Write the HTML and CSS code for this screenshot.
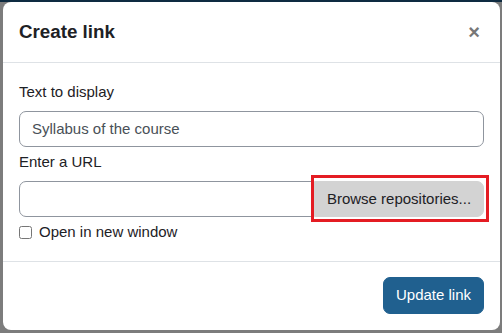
FILE: index.html
```html
<!DOCTYPE html>
<html lang="en">
<head>
<meta charset="utf-8">
<title>Create link</title>
<link rel="stylesheet" href="styles.css">
</head>
<body>
<div class="modal">
  <div class="modal-header">
    <h5 class="modal-title">Create link</h5>
    <span class="close" aria-label="Close">&times;</span>
  </div>
  <div class="modal-body">
    <label class="field-label">Text to display</label>
    <input class="form-control" type="text" value="Syllabus of the course">
    <label class="field-label url-label">Enter a URL</label>
    <div class="input-group">
      <input class="form-control group-input" type="text" value="">
      <div class="btn-wrap">
        <button class="btn btn-secondary">Browse repositories...</button>
        <span class="highlight"></span>
      </div>
    </div>
    <label class="check-row"><input type="checkbox" class="check"> Open in new window</label>
  </div>
  <div class="modal-footer">
    <button class="btn btn-primary">Update link</button>
  </div>
</div>
</body>
</html>
```
FILE: styles.css
```css
html, body {
  margin: 0;
  padding: 0;
}
body {
  width: 502px;
  height: 333px;
  overflow: hidden;
  background: linear-gradient(#0e2b41 0 2px, #7c7c7c 2px);
  font-family: "Liberation Sans", Arial, sans-serif;
  font-size: 15px;
  color: #1d2125;
}
.modal {
  margin: 2px 2px 0 3px;
  width: 497px;
  height: 328px;
  box-sizing: border-box;
  background: #fff;
  border-radius: 8px;
  display: flex;
  flex-direction: column;
  overflow: hidden;
}
.modal-header {
  display: flex;
  align-items: center;
  justify-content: space-between;
  padding: 16px;
  height: 61px;
  box-sizing: border-box;
  border-bottom: 1px solid #dee2e6;
}
.modal-title {
  margin: 0;
  font-size: 18.75px;
  font-weight: 700;
  line-height: 28px;
  color: #1d2125;
}
.close {
  font-size: 20px;
  font-weight: 700;
  color: #777;
  line-height: 1;
  margin-right: 4px;
}
.modal-body {
  padding: 17.5px 16px 16px 16px;
  display: flex;
  flex-direction: column;
}
.field-label {
  display: block;
  line-height: 22.5px;
  margin-bottom: 7.5px;
}
.url-label {
  margin-top: 3.5px;
  margin-bottom: 7.5px;
}
.form-control {
  display: block;
  width: 100%;
  box-sizing: border-box;
  height: 36.5px;
  padding: 6px 12px;
  font-family: inherit;
  font-size: 15px;
  color: #495057;
  border: 1px solid #8f959e;
  border-radius: 7px;
  background: #fff;
  margin: 0;
  outline: none;
}
.input-group {
  display: flex;
  align-items: stretch;
}
.group-input {
  flex: 1;
  border-top-right-radius: 0;
  border-bottom-right-radius: 0;
}
.btn-wrap {
  position: relative;
  display: flex;
}
.btn {
  font-family: inherit;
  font-size: 15px;
  line-height: 22.5px;
  padding: 6px 12px;
  border: 1px solid transparent;
  border-radius: 7px;
  cursor: pointer;
  margin: 0;
}
.btn-secondary {
  background: #d3d3d3;
  border-color: #d3d3d3;
  color: #1d2125;
  border-top-left-radius: 0;
  border-bottom-left-radius: 0;
  width: 170px;
  height: 36.5px;
  padding: 6px 0;
}
.highlight {
  position: absolute;
  left: -3px;
  top: -6px;
  width: 178px;
  height: 47px;
  box-sizing: border-box;
  border: 3.5px solid #e41c23;
  pointer-events: none;
}
.check-row {
  display: flex;
  align-items: center;
  line-height: 22.5px;
  margin-top: 4px;
  color: #1d2125;
}
.check {
  width: 13px;
  height: 13px;
  margin: 0 7px 0 0;
}
.modal-footer {
  margin-top: auto;
  border-top: 1px solid #dee2e6;
  padding: 15.5px 16px 16.5px;
  display: flex;
  justify-content: flex-end;
}
.btn-primary {
  background: #20608f;
  border-color: #20608f;
  color: #fff;
  height: 36.5px;
  width: 101px;
  padding: 6px 0;
}
```
